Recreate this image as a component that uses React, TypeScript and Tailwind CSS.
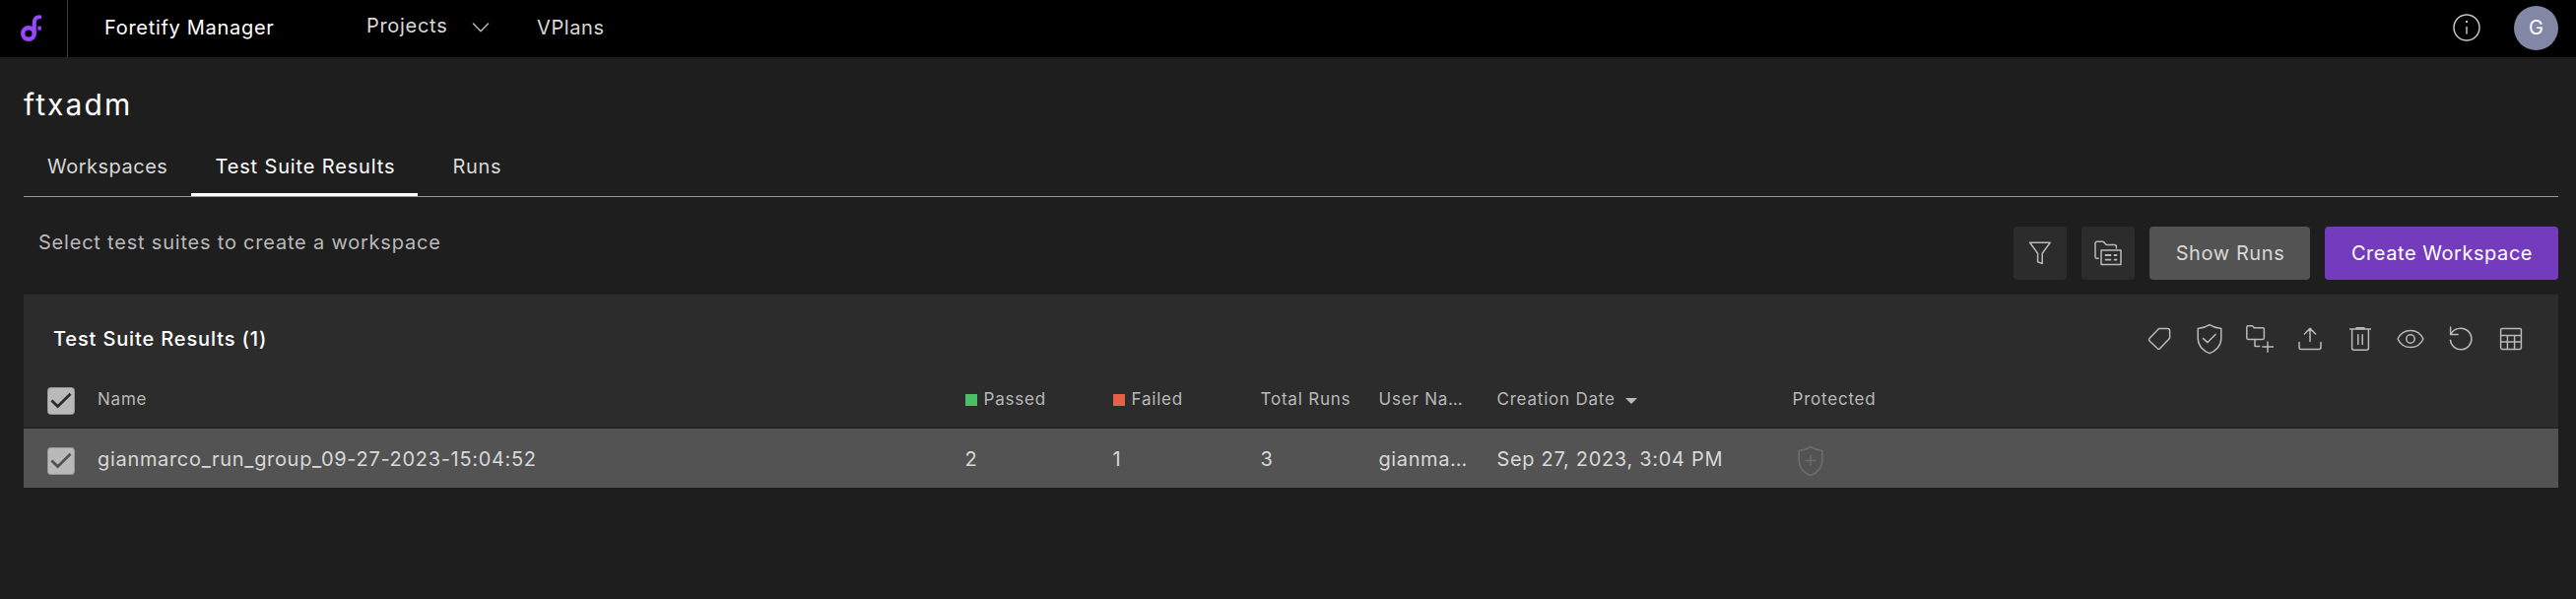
import type { ReactNode } from "react";

function Icon({ w, h, className = "", children }: { w: number; h: number; className?: string; children: ReactNode }) {
  return (
    <svg
      width={w}
      height={h}
      viewBox={`0 0 ${w} ${h}`}
      fill="none"
      stroke="currentColor"
      strokeWidth={1.5}
      strokeLinecap="round"
      strokeLinejoin="round"
      className={"shrink-0 " + className}
    >
      {children}
    </svg>
  );
}

const Logo = () => (
  <svg width="22" height="28" viewBox="0 0 22 28" fill="none" stroke="#9747ff" strokeWidth="4.4" className="shrink-0">
    <circle cx="8" cy="19" r="5.8" />
    <path d="M13.8 19V8.2C13.8 4.4 15.6 2.4 18.6 2.2H19.4" strokeLinecap="round" strokeWidth="4" />
    <path d="M17.4 11.6H20.8V15.6H17.4Z" fill="#9747ff" stroke="none" />
  </svg>
);

const Chevron = () => (
  <Icon w={18} h={12}>
    <path d="M1.5 2L9 9.8L16.5 2" />
  </Icon>
);

const Info = () => (
  <Icon w={28} h={28}>
    <circle cx="14" cy="14" r="13" />
    <path d="M14 13V20.6" strokeLinecap="butt" />
    <path d="M13 7H15V9H13Z" fill="currentColor" stroke="none" />
  </Icon>
);

const Filter = () => (
  <Icon w={24} h={24}>
    <path d="M1.6 1.2H22.2L14.2 12.2V22.6L9.6 20.8V12.2Z" />
  </Icon>
);

const FolderTable = () => (
  <Icon w={28} h={26}>
    <path d="M4.2 18.2H2.6Q1 18.2 1 16.4V3Q1 1.2 2.8 1.2H8.4Q9.4 1.2 10 2L11.4 3.8Q12 4.6 13 4.6H20.6Q22.4 4.6 22.4 6.4V8" />
    <path d="M7 10H27V24.6H7Z" />
    <path d="M10.8 15H17.2M19.8 15H23.2M10.8 19.6H17.2M19.8 19.6H23.2" strokeLinecap="butt" strokeWidth="1.8" />
  </Icon>
);

const Tag = () => (
  <Icon w={30} h={30}>
    <path d="M14.6 4.4H23.2Q25.6 4.4 25.6 6.8V14.2L15.6 24.8Q14.4 25.8 13.2 24.8L5 17Q4 15.8 5 14.6Z" />
  </Icon>
);

const Shield = ({ children }: { children: ReactNode }) => (
  <Icon w={30} h={32}>
    <path d="M15 1.6Q19.6 4.6 26.8 5.6V15.6C26.8 22.4 21.8 28 15 30.6C8.2 28 3.2 22.4 3.2 15.6V5.6Q10.4 4.6 15 1.6Z" />
    {children}
  </Icon>
);

const FolderPlus = () => (
  <Icon w={30} h={30}>
    <path d="M1.8 14V3.2Q1.8 1.8 3.2 1.8H7Q7.8 1.8 8.4 2.6L9.2 3.8H18Q19.4 3.8 19.4 5.2V14Q19.4 15.4 18 15.4H3.2Q1.8 15.4 1.8 14Z" />
    <path d="M10 15.6V22.4H14.6M23 18V28.2M17.8 23H28.4" />
  </Icon>
);

const Upload = () => (
  <Icon w={30} h={30}>
    <path d="M4 18.4V23.6Q4 25.6 6 25.6H24Q26 25.6 26 23.6V18.4M15 17.4V4.6M9.4 10L15 4.4L20.6 10" />
  </Icon>
);

const Trash = () => (
  <Icon w={30} h={30}>
    <path d="M4.6 5H25.4M6.6 5V24.2Q6.6 26.2 8.6 26.2H21.4Q23.4 26.2 23.4 24.2V5M12.8 10.8V20.4M17.2 10.8V20.4" />
    <path d="M10.4 4.2H19.6" strokeWidth="2.4" strokeLinecap="butt" />
  </Icon>
);

const Eye = () => (
  <Icon w={30} h={30}>
    <path d="M2 15C4.6 9.6 9.4 6.4 15 6.4S25.4 9.6 28 15C25.4 20.4 20.6 23.6 15 23.6S4.6 20.4 2 15Z" />
    <circle cx="15" cy="15" r="4.2" />
  </Icon>
);

const Undo = () => (
  <Icon w={30} h={30}>
    <path d="M4.6 3V10.4H12.2M5 10C7 6.4 10.6 4.2 15 4.2A10.8 10.8 0 1 1 4.4 16.2" />
  </Icon>
);

const TableIcon = () => (
  <Icon w={30} h={30}>
    <path d="M6 4.4H24Q25.4 4.4 25.4 5.8V24Q25.4 25.4 24 25.4H6Q4.6 25.4 4.6 24V5.8Q4.6 4.4 6 4.4Z" />
    <path d="M4.6 11.6H25.4M4.6 18H25.4M11.4 11.6V25.4M18.6 11.6V25.4" />
  </Icon>
);

function Checkbox({ tick }: { tick: string }) {
  return (
    <svg width="28" height="28" viewBox="0 0 28 28" className="shrink-0">
      <rect x="0.5" y="0.5" width="27" height="27" rx="3" fill="#b9b9b9" stroke="#979797" />
      <path d="M4.4 13.6L10.6 19.6L23.6 6.8" fill="none" stroke={tick} strokeWidth="2.8" />
    </svg>
  );
}

const cols = "grid grid-cols-[75px_880.5px_150px_150px_120px_120px_300px_1fr]";

export default function App() {
  return (
    <div className="flex h-[608px] w-full flex-col overflow-hidden bg-[#1e1e1e] font-[Inter,sans-serif] text-[20px] text-[#d8d8d8]">
      <header className="flex h-[58px] shrink-0 items-start bg-black">
        <div className="flex h-full w-[69px] border-r border-[#3d3d3d] pt-[14.5px] pl-[21px]">
          <Logo />
        </div>
        <div className="mt-[13px] ml-[37px] w-[266px] leading-[30px] tracking-[0.7px] whitespace-nowrap text-white">
          Foretify Manager
        </div>
        <nav className="flex whitespace-nowrap">
          <div className="mt-[11px] flex w-[173px] leading-[30px] tracking-[0.7px]">
            <span className="w-[107px]">Projects</span>
            <span className="pt-[11px] text-[#b9b9b9]">
              <Chevron />
            </span>
          </div>
          <div className="mt-[13px] leading-[30px] tracking-[0.6px]">VPlans</div>
        </nav>
        <div className="mt-[14px] ml-auto text-[#c4c4c4]">
          <Info />
        </div>
        <div className="mt-[6px] mr-[18px] ml-[34px] flex h-[45px] w-[45px] justify-center rounded-full bg-[#8187a5] pt-[7px] leading-[30px] text-white">
          G
        </div>
      </header>

      <main className="flex flex-col pr-[18px] pl-6">
        <h1 className="mt-[28px] text-[30px] leading-[40px] tracking-[2.1px] text-white">ftxadm</h1>

        <div className="mt-[28px] flex h-[46px] border-b border-[#999999] whitespace-nowrap">
          <div className="w-[170px] pl-[24px] leading-[30px] tracking-[0.5px]">Workspaces</div>
          <div className="h-[45px] w-[230px] border-b-[3px] border-white pl-[24.5px] leading-[30px] tracking-[0.85px] text-white">
            Test Suite Results
          </div>
          <div className="pl-[35.5px] leading-[30px] tracking-[0.66px]">Runs</div>
        </div>

        <div className="mt-[30px] flex h-[54px] items-start">
          <p className="mt-[1px] pl-[15px] leading-[30px] tracking-[0.79px] text-[#b9b9b9]">
            Select test suites to create a workspace
          </p>
          <div className="ml-auto flex gap-[15px] whitespace-nowrap">
            <button className="flex h-[54px] w-[54px] items-center justify-center rounded-[4px] bg-[#2c2c2c] text-[#b9b9b9]">
              <Filter />
            </button>
            <button className="flex h-[54px] w-[54px] items-center justify-center rounded-[4px] bg-[#2c2c2c] text-[#b9b9b9]">
              <FolderTable />
            </button>
            <button className="h-[54px] w-[163px] rounded-[4px] bg-[#535353] pl-[1px] tracking-[0.59px]">Show Runs</button>
            <button className="h-[54px] w-[237px] rounded-[4px] bg-[#753bbd] pl-[1px] tracking-[0.55px] text-white">
              Create Workspace
            </button>
          </div>
        </div>

        <section className="mt-[15px] bg-[#2c2c2c]">
          <div className="flex h-[90px] items-center justify-between pr-[33px] pl-[30px]">
            <h2 className="leading-[30px] font-medium tracking-[0.86px] text-white">Test Suite Results (1)</h2>
            <div className="flex items-center gap-[21px] text-[#b9b9b9]">
              <Tag />
              <Shield>
                <path d="M8.6 15.6L13 19.6L21 11.4" />
              </Shield>
              <FolderPlus />
              <Upload />
              <Trash />
              <Eye />
              <Undo />
              <TableIcon />
            </div>
          </div>

          <div className={cols + " h-[46px] border-b border-[#1e1e1e] text-[17px] leading-[30px] tracking-[0.79px] whitespace-nowrap text-[#b9b9b9]"}>
            <div className="pt-[4px] pl-[24px]">
              <Checkbox tick="#2c2c2c" />
            </div>
            <div className="pt-[1px]">Name</div>
            <div className="flex pt-[1px]">
              <span className="mt-[10px] mr-[7px] h-[12px] w-[12px] bg-[#4bbf65]" />
              Passed
            </div>
            <div className="flex pt-[1px]">
              <span className="mt-[10px] mr-[7px] h-[12px] w-[12px] bg-[#e65f49]" />
              Failed
            </div>
            <div className="pt-[1px]">Total Runs</div>
            <div className="pt-[1px]">User Na…</div>
            <div className="flex pt-[1px]">
              Creation Date
              <svg width="12" height="6" viewBox="0 0 12 6" fill="#b9b9b9" className="mt-[14px] ml-[10px]">
                <path d="M0 0H12L6 6Z" />
              </svg>
            </div>
            <div className="pt-[1px]">Protected</div>
          </div>

          <div className={cols + " h-[60px] bg-[#535353] leading-[30px] whitespace-nowrap"}>
            <div className="pt-[19px] pl-[24px]">
              <Checkbox tick="#535353" />
            </div>
            <div className="pt-[16px] tracking-[0.68px]">gianmarco_run_group_09-27-2023-15:04:52</div>
            <div className="pt-[16px]">2</div>
            <div className="pt-[16px]">1</div>
            <div className="pt-[16px]">3</div>
            <div className="pt-[16px] tracking-[0.6px]">gianma…</div>
            <div className="pt-[16px] tracking-[0.69px]">Sep 27, 2023, 3:04 PM</div>
            <div className="pt-[17px] pl-[3.5px] text-[#6e6e6e]">
              <Shield>
                <path d="M15 10.6V20.6M10 15.6H20" />
              </Shield>
            </div>
          </div>
        </section>
      </main>
    </div>
  );
}
